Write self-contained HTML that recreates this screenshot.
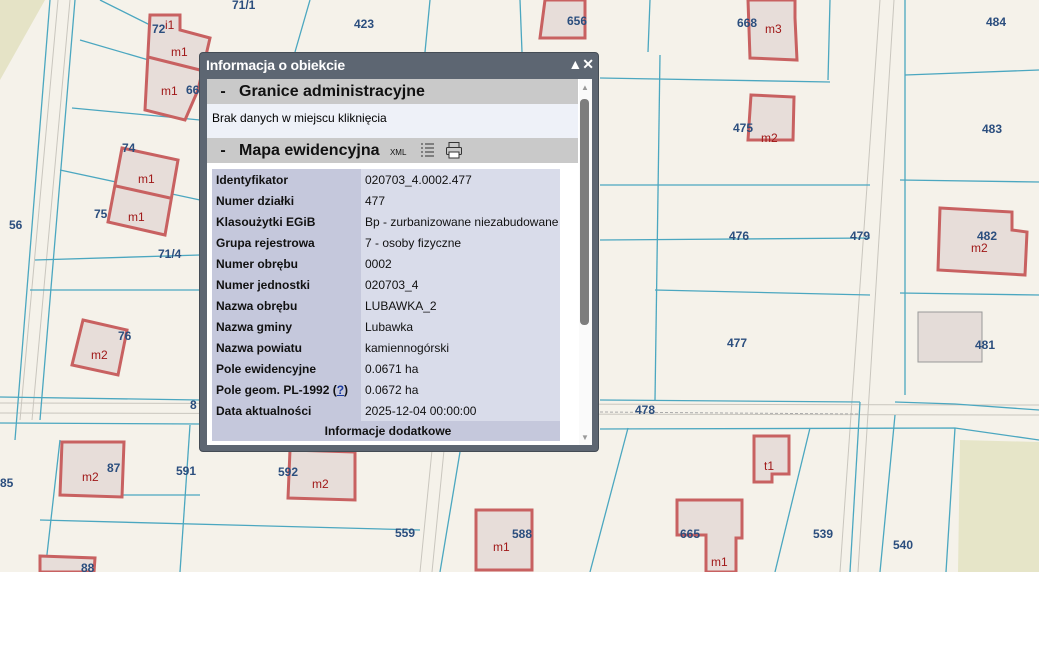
<!DOCTYPE html>
<html><head><meta charset="utf-8"><style>
body{margin:0;width:1039px;height:670px;overflow:hidden;background:#fff;font-family:"Liberation Sans",sans-serif;position:relative}
svg.map{position:absolute;left:0;top:0}
.pop{position:absolute;left:199px;top:52px;width:398px;height:398px;background:#5d6672;border:1px solid #444c55;border-radius:4px}
.title{position:absolute;left:6px;top:4px;color:#fff;font:bold 14px "Liberation Sans",sans-serif;letter-spacing:-0.2px}
.ctrl{position:absolute;right:4px;top:3px;color:#fff;font:bold 14px "Liberation Sans",sans-serif}
.body{position:absolute;left:7px;top:26px;width:385px;height:366px;background:#fff;overflow:hidden}
.sec{position:absolute;left:0;width:371px;height:25px;background:#c9c9c9;font:bold 16px "Liberation Sans",sans-serif;color:#111;line-height:25px}
.sb{position:absolute;left:372px;top:0;width:13px;height:366px;background:#fafafa}
.th{position:absolute;left:373px;top:20px;width:9px;height:226px;background:#7d7d7d;border-radius:4px}
table{position:absolute;left:5px;top:90px;border-collapse:collapse;font-size:12px;width:348px}
td{height:21px;padding:0 0 0 4px;color:#111}
td.l{background:#c5c8dc;font-weight:bold;width:145px}
td.v{background:#d9dcea}
</style></head><body>
<svg class="map" width="1039" height="572" viewBox="0 0 1039 572">
<rect width="1039" height="572" fill="#f5f2ea"/>
<polygon points="0,0 45,0 0,80" fill="#e5e3c6"/>
<polygon points="960,440 1039,442 1039,572 958,572" fill="#e6e5c8"/>
<g stroke="#c9c6be" fill="none" stroke-width="1">
<path d="M58,0 L20,420"/><path d="M70,0 L32,420"/>
<path d="M880,0 L840,572"/><path d="M894,0 L858,572"/>
<path d="M0,403 L1039,405"/><path d="M0,413 L1039,415"/>
<path d="M433,440 L420,572"/><path d="M445,440 L432,572"/>
</g>
<path d="M600,412 L858,414" stroke="#aaa" stroke-dasharray="3,2"/>
<g stroke="#4ba7c0" fill="none" stroke-width="1.3">
<path d="M50,0 L15,440"/><path d="M75,0 L40,420"/>
<path d="M100,0 L200,50"/><path d="M80,40 L200,75"/><path d="M72,108 L200,120"/>
<path d="M60,170 L200,200"/><path d="M35,260 L200,255"/><path d="M30,290 L200,290"/>
<path d="M310,0 L295,52"/><path d="M430,0 L425,52"/><path d="M520,0 L522,52"/>
<path d="M650,0 L648,52"/><path d="M830,0 L828,80"/><path d="M600,78 L830,82"/>
<path d="M600,185 L870,185"/><path d="M600,240 L870,238"/><path d="M655,290 L870,295"/>
<path d="M660,55 L655,400"/><path d="M905,0 L905,395"/><path d="M905,75 L1039,70"/>
<path d="M900,180 L1039,182"/><path d="M900,293 L1039,295"/>
<path d="M0,397 L200,400"/><path d="M600,400 L860,402"/><path d="M895,402 L955,404 L1039,410"/>
<path d="M0,423 L200,424"/><path d="M600,429 L955,428 L1039,440"/>
<path d="M860,402 L850,572"/><path d="M895,415 L880,572"/>
<path d="M628,428 L590,572"/><path d="M810,428 L775,572"/><path d="M955,428 L946,572"/>
<path d="M60,440 L45,572"/><path d="M190,425 L180,572"/><path d="M460,452 L440,572"/>
<path d="M40,520 L420,530"/><path d="M60,495 L200,495"/>
</g>
<g fill="#e7ddd9" stroke="#c86161" stroke-width="3">
<polygon points="150,15 180,15 180,30 210,38 198,90 185,120 145,110"/>
<line x1="148" y1="57" x2="200" y2="70"/>
<polygon points="122,148 178,160 165,235 108,222"/><line x1="116" y1="186" x2="170" y2="198"/>
<polygon points="83,320 127,330 118,375 72,365"/>
<polygon points="62,442 124,442 122,497 60,495"/>
<polygon points="40,556 95,558 94,572 40,572"/>
<polygon points="290,450 355,452 355,500 288,498"/>
<polygon points="476,510 532,510 532,570 476,570"/>
<polygon points="677,500 742,500 742,538 736,538 736,572 706,572 706,535 677,535"/>
<polygon points="754,436 789,436 789,474 772,474 772,482 754,482"/>
<polygon points="751,95 794,97 793,140 748,140"/>
<polygon points="748,0 795,0 795,18 797,60 750,58"/>
<polygon points="545,0 585,0 585,38 540,38"/>
<polygon points="940,208 1012,212 1012,230 1027,232 1025,275 938,270"/>
</g>
<rect x="918" y="312" width="64" height="50" fill="#e4dcd8" stroke="#999"/>
<g font-family="Liberation Sans" font-size="12" font-weight="bold" fill="#2b4e7e">
<text x="232" y="9">71/1</text><text x="354" y="28">423</text><text x="567" y="25">656</text>
<text x="737" y="27">668</text><text x="986" y="26">484</text><text x="733" y="132">475</text>
<text x="982" y="133">483</text><text x="729" y="240">476</text><text x="850" y="240">479</text>
<text x="977" y="240">482</text><text x="727" y="347">477</text><text x="975" y="349">481</text>
<text x="152" y="33">72</text><text x="186" y="94">66</text><text x="122" y="152">74</text>
<text x="94" y="218">75</text><text x="9" y="229">56</text><text x="158" y="258">71/4</text>
<text x="118" y="340">76</text><text x="190" y="409">8</text><text x="635" y="414">478</text>
<text x="107" y="472">87</text><text x="176" y="475">591</text><text x="278" y="476">592</text>
<text x="0" y="487">85</text><text x="395" y="537">559</text><text x="512" y="538">588</text>
<text x="680" y="538">665</text><text x="813" y="538">539</text><text x="893" y="549">540</text>
<text x="81" y="572">88</text>
</g>
<g font-family="Liberation Sans" font-size="12" fill="#a01818">
<text x="165" y="29">i1</text><text x="171" y="56">m1</text><text x="161" y="95">m1</text>
<text x="138" y="183">m1</text><text x="128" y="221">m1</text><text x="91" y="359">m2</text>
<text x="82" y="481">m2</text><text x="312" y="488">m2</text><text x="493" y="551">m1</text>
<text x="711" y="566">m1</text><text x="764" y="470">t1</text><text x="761" y="142">m2</text>
<text x="765" y="33">m3</text><text x="971" y="252">m2</text>
</g>
</svg>
<div class="pop">
<div class="title">Informacja o obiekcie</div>
<div class="ctrl">▲✕</div>
<div class="body">
<div class="sec" style="top:0">&nbsp;&nbsp;&nbsp;-&nbsp;&nbsp;&nbsp;Granice administracyjne</div>
<div style="position:absolute;left:0;top:25px;width:371px;height:34px;background:#eef1f8;font-size:12px;line-height:28px;padding-left:5px;box-sizing:border-box">Brak danych w miejscu kliknięcia</div>
<div class="sec" style="top:59px">&nbsp;&nbsp;&nbsp;-&nbsp;&nbsp;&nbsp;Mapa ewidencyjna <span style="font-size:8px;font-weight:normal;margin-left:6px">XML</span>
<svg width="16" height="16" style="vertical-align:-3px;margin-left:8px" viewBox="0 0 16 16"><g stroke="#333" stroke-width="1"><path d="M2 2h2M6 2h9M2 6h2M6 6h9M2 10h2M6 10h9M2 14h2M6 14h9"/></g></svg>
<svg width="18" height="18" style="vertical-align:-4px;margin-left:6px" viewBox="0 0 18 18"><g fill="none" stroke="#333"><rect x="4" y="1.5" width="10" height="5"/><rect x="1.5" y="6.5" width="15" height="7" rx="1"/><rect x="4" y="11" width="10" height="6" fill="#fff"/></g></svg></div>
<table>
<tr><td class="l">Identyfikator</td><td class="v">020703_4.0002.477</td></tr>
<tr><td class="l">Numer działki</td><td class="v">477</td></tr>
<tr><td class="l">Klasoużytki EGiB</td><td class="v">Bp - zurbanizowane niezabudowane</td></tr>
<tr><td class="l">Grupa rejestrowa</td><td class="v">7 - osoby fizyczne</td></tr>
<tr><td class="l">Numer obrębu</td><td class="v">0002</td></tr>
<tr><td class="l">Numer jednostki</td><td class="v">020703_4</td></tr>
<tr><td class="l">Nazwa obrębu</td><td class="v">LUBAWKA_2</td></tr>
<tr><td class="l">Nazwa gminy</td><td class="v">Lubawka</td></tr>
<tr><td class="l">Nazwa powiatu</td><td class="v">kamiennogórski</td></tr>
<tr><td class="l">Pole ewidencyjne</td><td class="v">0.0671 ha</td></tr>
<tr><td class="l">Pole geom. PL-1992 (<span style="color:#1a3aa0;text-decoration:underline">?</span>)</td><td class="v">0.0672 ha</td></tr>
<tr><td class="l">Data aktualności</td><td class="v">2025-12-04 00:00:00</td></tr>
<tr><td colspan="2" style="background:#c5c8dc;text-align:center;font-weight:bold;height:20px">Informacje dodatkowe</td></tr>
</table>
<div class="sb"></div><div class="th"></div>
<div style="position:absolute;left:374px;top:4px;font-size:8px;color:#999">▲</div>
<div style="position:absolute;left:374px;top:354px;font-size:8px;color:#999">▼</div>
</div>
</div>
</body></html>
